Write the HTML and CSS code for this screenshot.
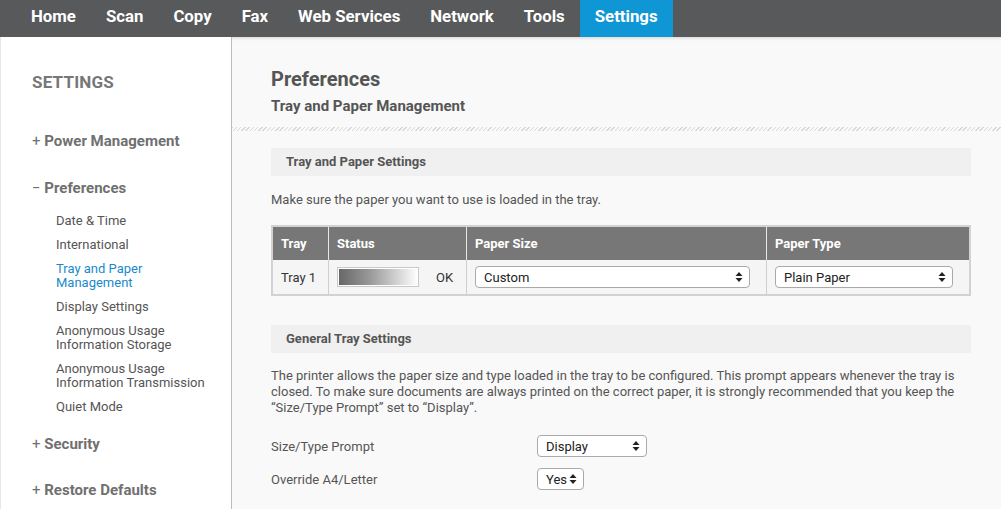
FILE: index.html
```html
<!DOCTYPE html>
<html lang="en">
<head>
    <meta charset="UTF-8">
    <title>Settings</title>
    <link rel="stylesheet" href="styles.css">
</head>
<body>

    <ul class="topnav">
        <li><a href="#">Home</a></li>
        <li><a href="#">Scan</a></li>
        <li><a href="#">Copy</a></li>
        <li><a href="#">Fax</a></li>
        <li><a href="#">Web Services</a></li>
        <li><a href="#">Network</a></li>
        <li><a href="#">Tools</a></li>
        <li class="aktiv"><a href="#">Settings</a></li>
    </ul>

<div class="side">

    <nav class="meny"><!--VENSTRE MENY-->
        <h3>SETTINGS</h3>
        <div class="gruppe"><span class="tegn">+</span> Power Management</div>
        <div class="gruppe"><span class="tegn">&minus;</span> Preferences</div>
        <ul class="under">
            <li>Date &amp; Time</li>
            <li>International</li>
            <li class="valgt">Tray and Paper<br>Management</li>
            <li>Display Settings</li>
            <li>Anonymous Usage<br>Information Storage</li>
            <li>Anonymous Usage<br>Information Transmission</li>
            <li>Quiet Mode</li>
        </ul>
        <div class="gruppe"><span class="tegn">+</span> Security</div>
        <div class="gruppe siste"><span class="tegn">+</span> Restore Defaults</div>
    </nav>

    <main>
        <div class="topp">
            <h1>Preferences</h1>
            <h2>Tray and Paper Management</h2>
        </div>
        <div class="striper"></div>

        <div class="innhold">
            <div class="seksjon">Tray and Paper Settings</div>
            <p class="info">Make sure the paper you want to use is loaded in the tray.</p>

            <table class="skuff">
                <tr>
                    <th class="k1">Tray</th>
                    <th class="k2">Status</th>
                    <th class="k3">Paper Size</th>
                    <th>Paper Type</th>
                </tr>
                <tr>
                    <td>Tray 1</td>
                    <td><div class="status"><div class="nivaa"></div><span>OK</span></div></td>
                    <td class="liste"><div class="velg"><span>Custom</span><svg width="8" height="12" viewBox="0 0 8 12"><path d="M4 1 L7.5 5 H0.5 Z M4 11 L7.5 7 H0.5 Z" fill="#222"/></svg></div></td>
                    <td class="liste"><div class="velg"><span>Plain Paper</span><svg width="8" height="12" viewBox="0 0 8 12"><path d="M4 1 L7.5 5 H0.5 Z M4 11 L7.5 7 H0.5 Z" fill="#222"/></svg></div></td>
                </tr>
            </table>

            <div class="seksjon generell">General Tray Settings</div>
            <p class="info tekst">The printer allows the paper size and type loaded in the tray to be configured. This prompt appears whenever the tray is closed. To make sure documents are always printed on the correct paper, it is strongly recommended that you keep the &ldquo;Size/Type Prompt&rdquo; set to &ldquo;Display&rdquo;.</p>

            <div class="rad">
                <label>Size/Type Prompt</label>
                <div class="velg mid"><span>Display</span><svg width="8" height="12" viewBox="0 0 8 12"><path d="M4 1 L7.5 5 H0.5 Z M4 11 L7.5 7 H0.5 Z" fill="#222"/></svg></div>
            </div>
            <div class="rad">
                <label>Override A4/Letter</label>
                <div class="velg liten"><span>Yes</span><svg width="8" height="12" viewBox="0 0 8 12"><path d="M4 1 L7.5 5 H0.5 Z M4 11 L7.5 7 H0.5 Z" fill="#222"/></svg></div>
            </div>
        </div>
    </main>

</div>

</body>
</html>
```

FILE: styles.css
```css
/*TOPPMENY*/
body {
    margin: 0;
    background-color: #f9f9f9;
    font-family: Roboto, "Liberation Sans", sans-serif;
    color: #555;
    overflow: hidden;
}
.topnav {
    list-style-type: none;
    margin: 0;
    padding: 0 0 0 16px;
    display: flex;
    height: 37px;
    background-color: #58595b;
    box-shadow: 0 2px 2px #e2e2e2;
}
.topnav li a {
    display: block;
    color: white;
    padding: 0 15px;
    line-height: 33px;
    font-size: 16.8px;
    font-weight: bold;
    text-decoration: none;
}
.topnav .aktiv {
    background-color: #0f96d5;
}

.side {
    display: flex;
    height: 472px;
}

/*VENSTRE MENY*/
.meny {
    width: 199px;
    padding-left: 31px;
    background-color: #fff;
    border-left: 1px solid #e6e6e6;
    border-right: 1px solid #bdbdbd;
}
.meny h3 {
    margin: 35px 0 0 0;
    font-size: 17px;
    color: #777;
    letter-spacing: 0.2px;
}
.gruppe {
    margin-top: 29px;
    font-size: 15px;
    font-weight: bold;
    color: #707070;
}
.gruppe .tegn {
    font-weight: normal;
}
.meny h3 + .gruppe {
    margin-top: 40px;
}
.under {
    list-style-type: none;
    margin: 17px 0 0 0;
    padding: 0 0 0 24px;
}
.under li {
    font-size: 13px;
    line-height: 14px;
    margin-bottom: 10px;
    color: #555;
}
.under li:last-child {
    margin-bottom: 0;
}
.under + .gruppe {
    margin-top: 21px;
}
.gruppe.siste {
    margin-top: 28px;
}
.under .valgt {
    color: #1a8acb;
}

/*HOVEDDEL*/
main {
    flex: 1;
}
.topp {
    padding: 30px 0 0 39px;
}
h1 {
    font-size: 20px;
    margin: 0;
    color: #555;
}
h2 {
    font-size: 15px;
    margin: 6px 0 0 0;
    color: #555;
}
.striper {
    height: 4px;
    margin-top: 12px;
    background: repeating-linear-gradient(135deg, #d8d8d8 0 1px, transparent 1px 3px);
}
.innhold {
    padding: 0 30px 0 39px;
}
.seksjon {
    margin-top: 17px;
    height: 28px;
    line-height: 28px;
    padding-left: 15px;
    background-color: #f0f0f0;
    font-size: 13px;
    font-weight: bold;
    color: #555;
}
.generell {
    margin-top: 29px;
}
.info {
    font-size: 13px;
    margin: 16px 0 18px 0;
    color: #555;
}
.tekst {
    line-height: 16px;
    margin: 15px 0 19px 0;
}

/*TABELL*/
.skuff {
    width: 100%;
    border-collapse: collapse;
    border: 2px solid #d2d2d2;
    font-size: 13px;
}
.skuff th {
    background-color: #777;
    color: #fff;
    text-align: left;
    height: 33px;
    padding: 0 8px;
    border-left: 1px solid #e8e8e8;
}
.skuff td {
    background-color: #f5f5f5;
    height: 34px;
    padding: 0 8px;
    border-left: 1px solid #cfcfcf;
    color: #333;
}
.skuff .liste {
    padding-right: 16px;
}
.k1 { width: 39px; }
.k2 { width: 121px; }
.k3 { width: 283px; }

.status {
    display: flex;
    align-items: center;
    gap: 17px;
}
.nivaa {
    width: 80px;
    height: 18px;
    border: 1px solid #c8c8c8;
    background: linear-gradient(to right, #666, #999 40%, #fff);
    box-shadow: inset 0 0 0 1px #fff;
}

/*NEDTREKKSLISTER*/
.velg {
    display: flex;
    align-items: center;
    justify-content: space-between;
    height: 20px;
    padding: 0 6px 0 8px;
    border: 1px solid #aaa;
    border-radius: 4px;
    background-color: #fff;
    font-size: 13px;
    color: #222;
}
.mid { width: 94px; }
.liten { width: 31px; }

.rad {
    display: flex;
    align-items: center;
    height: 22px;
    margin-bottom: 11px;
    font-size: 13px;
}
.rad label {
    width: 266px;
}
```
